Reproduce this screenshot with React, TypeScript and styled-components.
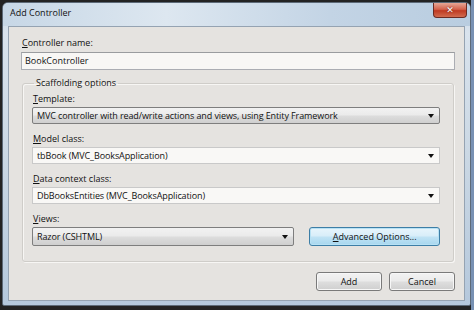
import React from "react";
import styled, { createGlobalStyle } from "styled-components";

const Global = createGlobalStyle`
  html, body { margin: 0; padding: 0; background: #232323; }
  body { width: 474px; height: 310px; overflow: hidden; font-family: "Open Sans", "Noto Sans", sans-serif; font-size: 9px; color: #111; }
`;

const Screen = styled.div`
  width: 474px;
  height: 310px;
  padding: 2px 3px 0 2px;
  box-sizing: border-box;
  background: linear-gradient(90deg, #232323 0, #232323 471px, #7891b3 471px);
`;

const Window = styled.div`
  height: 304px;
  border-radius: 6px 6px 2px 2px;
  border: 1px solid #5d6a78;
  background: linear-gradient(180deg, #c9d8e7 0%, #d9e3ed 10%, #cbd8e4 50%, #b5c8dc 100%);
  display: flex;
  flex-direction: column;
  box-sizing: border-box;
`;

const TitleBar = styled.div`
  height: 23px;
  display: flex;
  align-items: flex-start;
  justify-content: space-between;
  padding-left: 7px;
  background: linear-gradient(90deg, #c7d7e6 0%, #dde7f0 35%, #c3d4e5 70%, #b9cde0 100%);
  border-radius: 5px 5px 0 0;
`;

const Title = styled.div`
  padding-top: 3px;
  line-height: 14px;
  font-size: 9px;
  color: #111;
`;

const CloseBtn = styled.div`
  width: 34px;
  height: 15px;
  margin-right: 3px;
  border: 1px solid #6b2a22;
  border-top: none;
  border-radius: 0 0 4px 4px;
  background: linear-gradient(180deg, #e7a796 0%, #d4624c 45%, #bf3a22 55%, #d16b4f 100%);
  display: flex;
  align-items: center;
  justify-content: center;
  color: #fff;
  font-family: "DejaVu Sans", sans-serif;
  font-weight: bold;
  font-size: 9px;
  text-shadow: 0 0 2px #5a1a10;
  box-sizing: border-box;
`;

const Client = styled.div`
  flex: 1;
  margin: 0 5px 4px 5px;
  background: #e5e3e0;
  border: 1px solid #95a3b2;
  padding: 8px 9px 0 12px;
  display: flex;
  flex-direction: column;
`;

const Label = styled.div<{ $mt?: number }>`
  margin-top: ${(p) => p.$mt ?? 0}px;
  margin-left: 1px;
  height: 16px;
  line-height: 16px;
  white-space: nowrap;
`;

const U = styled.span`
  text-decoration: underline;
  text-underline-offset: 1px;
`;

const TextBox = styled.div`
  height: 18px;
  margin-top: 1px;
  border: 1px solid #abadb3;
  border-top-color: #9a9c9f;
  background: #f8f7f5;
  padding-left: 3px;
  line-height: 16px;
  box-sizing: border-box;
`;

const Group = styled.fieldset`
  margin: 6px 1px 0 1px;
  padding: 1px 13px 15px 9px;
  border: 1px solid #cfcdc9;
  border-radius: 3px;
  box-shadow: inset 1px 1px 0 #f7f6f4, 1px 1px 0 #f7f6f4;
  display: flex;
  flex-direction: column;
  min-width: 0;
`;

const Legend = styled.legend`
  padding: 0 2px;
  margin-left: 2px;
  line-height: 14px;
`;

const Combo = styled.div<{ $grey?: boolean; $width?: string; $h?: number }>`
  height: ${(p) => p.$h ?? 17}px;
  width: ${(p) => p.$width ?? "auto"};
  display: flex;
  align-items: center;
  justify-content: space-between;
  padding: 0 5px 0 4px;
  box-sizing: border-box;
  white-space: nowrap;
  letter-spacing: -0.1px;
  border: 1px solid ${(p) => (p.$grey ? "#7e7e7e" : "#c9c9c9")};
  border-radius: ${(p) => (p.$grey ? "2px" : "0")};
  background: ${(p) =>
    p.$grey
      ? "linear-gradient(180deg, #f2f2f2 0%, #ebebeb 45%, #dcdcdc 55%, #cfcfcf 100%)"
      : "#f9f8f6"};
`;

const Arrow = styled.span`
  width: 0;
  height: 0;
  border-left: 3px solid transparent;
  border-right: 3px solid transparent;
  border-top: 4px solid #111;
`;

const Row = styled.div`
  display: flex;
  align-items: center;
  gap: 15px;
`;

const Button = styled.div<{ $focus?: boolean; $w: number }>`
  width: ${(p) => p.$w}px;
  height: 19px;
  display: flex;
  align-items: center;
  justify-content: center;
  box-sizing: border-box;
  border-radius: 3px;
  border: 1px solid ${(p) => (p.$focus ? "#3d7ea6" : "#7a7a7a")};
  background: ${(p) =>
    p.$focus
      ? "linear-gradient(180deg, #e8f5fc 0%, #d9eef9 45%, #bfe2f4 55%, #a7d7ef 100%)"
      : "linear-gradient(180deg, #f2f2f2 0%, #ebebeb 45%, #dddddd 55%, #cfcfcf 100%)"};
  box-shadow: inset 0 0 0 1px ${(p) => (p.$focus ? "#b7e1f4" : "#f7f7f7")};
`;

const Footer = styled.div`
  display: flex;
  justify-content: flex-end;
  gap: 7px;
  margin-top: 10px;
`;

export default function App() {
  return (
    <>
      <Global />
      <Screen>
        <Window>
          <TitleBar>
            <Title>Add Controller</Title>
            <CloseBtn>✕</CloseBtn>
          </TitleBar>
          <Client>
            <Label>
              <U>C</U>ontroller name:
            </Label>
            <TextBox>BookController</TextBox>
            <Group>
              <Legend>Scaffolding options</Legend>
              <Label>
                <U>T</U>emplate:
              </Label>
              <Combo $grey>
                <span>MVC controller with read/write actions and views, using Entity Framework</span>
                <Arrow />
              </Combo>
              <Label $mt={7}>
                <U>M</U>odel class:
              </Label>
              <Combo>
                <span>tbBook (MVC_BooksApplication)</span>
                <Arrow />
              </Combo>
              <Label $mt={7}>
                <U>D</U>ata context class:
              </Label>
              <Combo>
                <span>DbBooksEntities (MVC_BooksApplication)</span>
                <Arrow />
              </Combo>
              <Label $mt={7}>
                <U>V</U>iews:
              </Label>
              <Row>
                <Combo $grey $width="263px" $h={19}>
                  <span>Razor (CSHTML)</span>
                  <Arrow />
                </Combo>
                <Button $focus $w={131}>
                  <span>
                    <U>A</U>dvanced Options...
                  </span>
                </Button>
              </Row>
            </Group>
            <Footer>
              <Button $w={66}>Add</Button>
              <Button $w={66}>Cancel</Button>
            </Footer>
          </Client>
        </Window>
      </Screen>
    </>
  );
}
